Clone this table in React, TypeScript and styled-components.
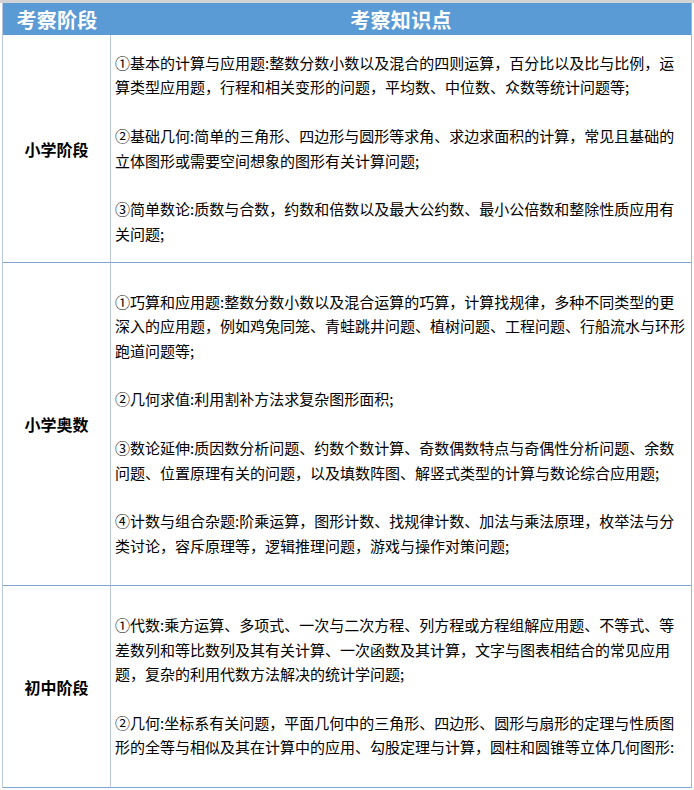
import React from "react"
import styled, { createGlobalStyle } from "styled-components"

const GlobalStyle = createGlobalStyle`
  html, body {
    margin: 0;
    padding: 0;
    background: #fff;
  }
  body {
    font-family: "Noto Sans CJK SC", "Noto Sans", sans-serif;
    color: #000;
  }
`

type Row = {
  stage: string
  height: number
  items: string[]
}

const rows: Row[] = [
  {
    stage: "小学阶段",
    height: 228,
    items: [
      "①基本的计算与应用题:整数分数小数以及混合的四则运算，百分比以及比与比例，运算类型应用题，行程和相关变形的问题，平均数、中位数、众数等统计问题等;",
      "②基础几何:简单的三角形、四边形与圆形等求角、求边求面积的计算，常见且基础的立体图形或需要空间想象的图形有关计算问题;",
      "③简单数论:质数与合数，约数和倍数以及最大公约数、最小公倍数和整除性质应用有关问题;",
    ],
  },
  {
    stage: "小学奥数",
    height: 323,
    items: [
      "①巧算和应用题:整数分数小数以及混合运算的巧算，计算找规律，多种不同类型的更深入的应用题，例如鸡兔同笼、青蛙跳井问题、植树问题、工程问题、行船流水与环形跑道问题等;",
      "②几何求值:利用割补方法求复杂图形面积;",
      "③数论延伸:质因数分析问题、约数个数计算、奇数偶数特点与奇偶性分析问题、余数问题、位置原理有关的问题，以及填数阵图、解竖式类型的计算与数论综合应用题;",
      "④计数与组合杂题:阶乘运算，图形计数、找规律计数、加法与乘法原理，枚举法与分类讨论，容斥原理等，逻辑推理问题，游戏与操作对策问题;",
    ],
  },
  {
    stage: "初中阶段",
    height: 202,
    items: [
      "①代数:乘方运算、多项式、一次与二次方程、列方程或方程组解应用题、不等式、等差数列和等比数列及其有关计算、一次函数及其计算，文字与图表相结合的常见应用题，复杂的利用代数方法解决的统计学问题;",
      "②几何:坐标系有关问题，平面几何中的三角形、四边形、圆形与扇形的定理与性质图形的全等与相似及其在计算中的应用、勾股定理与计算，圆柱和圆锥等立体几何图形:",
    ],
  },
]

export default function App() {
  return (
    <>
      <GlobalStyle />
      <Sheet>
        <Table>
          <HeadCell>考察阶段</HeadCell>
          <HeadCell>考察知识点</HeadCell>
          {rows.map(row => (
            <React.Fragment key={row.stage}>
              <StageCell $h={row.height}>{row.stage}</StageCell>
              <PointsCell $h={row.height}>
                {row.items.map(item => (
                  <Point key={item}>{item}</Point>
                ))}
              </PointsCell>
            </React.Fragment>
          ))}
        </Table>
      </Sheet>
    </>
  )
}

const Sheet = styled.div`
  width: 694px;
  height: 790px;
  overflow: hidden;
  border-top: 3px solid #d3d3d3;
  box-sizing: border-box;
`

const Table = styled.div`
  display: grid;
  grid-template-columns: 108px 580px;
  margin-left: 2px;
  width: max-content;
  border-left: 1px solid #b9c6de;
  border-right: 1px solid #9cb8dc;
`

const HeadCell = styled.div`
  height: 32px;
  display: flex;
  align-items: center;
  justify-content: center;
  background: #5b9bd5;
  color: #fff;
  font-size: 20px;
  font-weight: 700;
  letter-spacing: 0.3px;
`

const StageCell = styled.div<{ $h: number }>`
  box-sizing: border-box;
  height: ${p => p.$h}px;
  display: flex;
  align-items: center;
  justify-content: center;
  border-right: 1px solid #b9c6de;
  border-bottom: 1px solid #7ea5d6;
  font-size: 16px;
  font-weight: 700;
`

const PointsCell = styled.div<{ $h: number }>`
  box-sizing: border-box;
  height: ${p => p.$h}px;
  display: flex;
  flex-direction: column;
  justify-content: center;
  gap: 24.4px;
  padding: 0 6px 0 4px;
  border-bottom: 1px solid #7ea5d6;
  overflow: hidden;
`

const Point = styled.p`
  margin: 0;
  font-size: 15px;
  line-height: 24.4px;
  color: #000;
`
